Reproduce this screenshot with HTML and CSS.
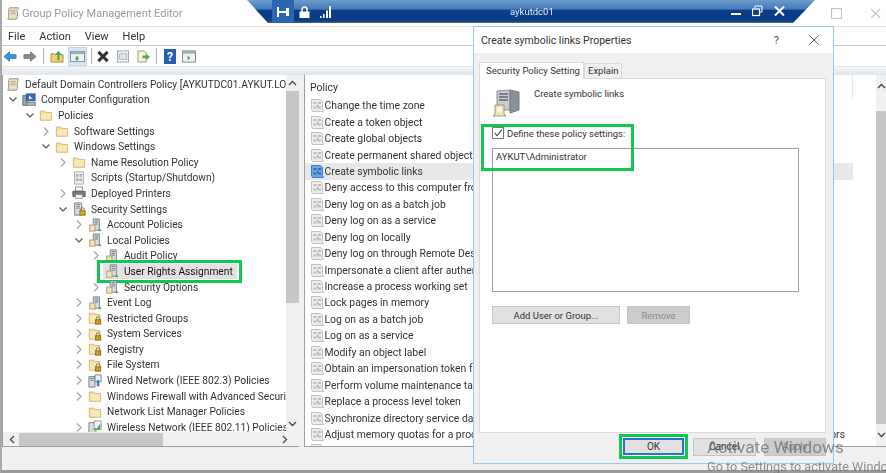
FILE: index.html
```html
<!DOCTYPE html>
<html>
<head>
    <link rel="stylesheet" href="styles.css">
</head>
<body>
    <svg class="defs" width="0" height="0">
        <symbol id="scroll" viewBox="0 0 16 16">
            <path d="M4 2h10v2l-1 1v8l-1 2H2l1-2V4z" fill="#eee3c4" stroke="#8f8a78"/>
            <path d="M5 5h6M5 7h6M5 9h6" stroke="#a9a28c"/>
        </symbol>
        <symbol id="computer" viewBox="0 0 16 16">
            <rect x="1" y="3" width="5" height="11" fill="#9aa3ad" stroke="#5f6870"/>
            <rect x="5" y="1" width="10" height="8" fill="#2f6fd0" stroke="#4a5560"/>
            <path d="M6 11h9l1 3H5z" fill="#b9c0c8" stroke="#6b747d"/>
            <path d="M8 3l4 3-4 1z" fill="#fff"/>
        </symbol>
        <symbol id="folder" viewBox="0 0 16 16">
            <path d="M1.500 3.500h5l1 1.500h7v9h-13z" fill="#f6dc9a" stroke="#d3b36c"/>
            <path d="M2.500 6h11v7h-11z" fill="#fae8b8"/>
        </symbol>
        <symbol id="folder-lock" viewBox="0 0 16 16">
            <path d="M1.500 2.500h5l1 1.500h6v10h-12z" fill="#f6dc9a" stroke="#d3b36c"/>
            <path d="M2.500 5h10v8h-10z" fill="#fae8b8"/>
            <path d="M9.500 10V8.500a2 2 0 0 1 4 0V10" fill="none" stroke="#7d6a3a"/>
            <rect x="8.500" y="10" width="6" height="5" fill="#c99a25" stroke="#8b6a18"/>
        </symbol>
        <symbol id="server" viewBox="0 0 16 16">
            <path d="M6 1h7v13H6z" fill="#d8dcdf" stroke="#6f7a84"/>
            <path d="M7.500 3h4M7.500 5h4M7.500 7h4" stroke="#6f7a84"/>
            <rect x="2" y="8" width="6" height="7" fill="#efe3bd" stroke="#a8986a"/>
            <rect x="12" y="13" width="3" height="2" fill="#45b04a"/>
        </symbol>
        <symbol id="server-lock" viewBox="0 0 16 16">
            <path d="M3 1h8v14H3z" fill="#d8dcdf" stroke="#6f7a84"/>
            <path d="M5 3h4M5 5h4M5 7h4" stroke="#6f7a84"/>
            <path d="M10 10V8.500a2 2 0 0 1 4 0V10" fill="none" stroke="#7d6a3a"/>
            <rect x="9" y="10" width="6" height="5" fill="#d9a92a" stroke="#8b6a18"/>
        </symbol>
        <symbol id="scripts" viewBox="0 0 16 16">
            <path d="M3 1h10v14H3z" fill="#f1f1f1" stroke="#a5a5a5"/>
            <path d="M5 4h2v2H5zM9 4h2v2H9zM5 9h2v2H5zM9 9h2v2H9z" fill="none" stroke="#9a9a9a"/>
        </symbol>
        <symbol id="printer" viewBox="0 0 16 16">
            <path d="M4 1h8v5H4z" fill="#f4f4f4" stroke="#8b8b8b"/>
            <path d="M1 6h14v6H1z" fill="#77797c" stroke="#55585c"/>
            <path d="M4 10h8v4H4z" fill="#fff" stroke="#8b8b8b"/>
        </symbol>
        <symbol id="wired" viewBox="0 0 16 16">
            <path d="M1 3h7v12H1z" fill="#d8dcdf" stroke="#6f7a84"/>
            <path d="M8 1h7v8H8z" fill="#e9eef3" stroke="#6f7a84"/>
            <path d="M10 7h3v7h-3z" fill="#3d7fd0"/>
            <path d="M2.500 5h4M2.500 7h4" stroke="#6f7a84"/>
        </symbol>
        <symbol id="wireless" viewBox="0 0 16 16">
            <path d="M1 3h8v12H1z" fill="#d8dcdf" stroke="#6f7a84"/>
            <path d="M7 1h8v10H7z" fill="#f0f2f4" stroke="#8a939b"/>
            <path d="M4 12l4-3 2 1 4-6v7H4z" fill="#45a84a"/>
        </symbol>
        <symbol id="policy" viewBox="0 0 14 15">
            <path d="M1.500 1.500h9l2 2v8l1 2h-11l-1-2z" fill="#ededed" stroke="#c2c2c2"/>
            <path d="M3.500 4h3v2h-3zM8 4h3v2H8zM3.500 8.500h3v2h-3zM8 8.500h3v2H8z" fill="#bdbdbd"/>
            <path d="M7 6.500l2 1.500-2 1.500z" fill="#a8a8a8"/>
        </symbol>
        <symbol id="policy-on" viewBox="0 0 14 15">
            <path d="M1.500 1.500h9l2 2v8l1 2h-11l-1-2z" fill="#6aa6e6" stroke="#3f80cc"/>
            <path d="M3.500 4h3v2h-3zM8 4h3v2H8zM3.500 8.500h3v2h-3zM8 8.500h3v2H8z" fill="#2f6fc0"/>
            <path d="M7 6.500l2 1.500-2 1.500z" fill="#2f6fc0"/>
        </symbol>
        <symbol id="open" viewBox="0 0 8 11">
            <path d="M.5 3.500L4 7l3.500-3.500" fill="none" stroke="#555" stroke-width="1.200"/>
        </symbol>
        <symbol id="closed" viewBox="0 0 8 11">
            <path d="M2 1.500l4 4-4 4" fill="none" stroke="#a6a6a6" stroke-width="1.200"/>
        </symbol>
    </svg>

    <div class="window">
        <div class="titlebar">
            <svg class="ico" viewBox="0 0 16 16"><use href="#scroll"/></svg>
            <span class="title-text">Group Policy Management Editor</span>
            <span class="title-controls">
                <svg width="11" height="11" viewBox="0 0 11 11"><rect x=".5" y=".5" width="10" height="10" fill="none" stroke="#c4c4c4" stroke-width="1.200"/></svg>
                <svg width="11" height="11" viewBox="0 0 11 11"><path d="M1 1l9 9M10 1l-9 9" stroke="#c4c4c4" stroke-width="1.100"/></svg>
            </span>
        </div>

        <div class="menubar">
            <span>File</span>
            <span>Action</span>
            <span>View</span>
            <span>Help</span>
        </div>

        <div class="toolbar">
            <svg class="tool" viewBox="0 0 15 14"><path d="M1 7l6-5v3h7v4H7v3z" fill="#3a96dc" stroke="#2a78bc"/></svg>
            <svg class="tool" viewBox="0 0 15 14"><path d="M14 7L8 2v3H1v4h7v3z" fill="#8a8a8a" stroke="#777"/></svg>
            <span class="tool-sep"></span>
            <svg class="tool" viewBox="0 0 15 14"><path d="M1 4h4l1 1h8v8H1z" fill="#f0cf7c" stroke="#b08c3c"/><path d="M8 11V5H5l4-4 4 4h-3v6z" fill="#49a54a"/></svg>
            <span class="tool-on">
                <svg class="tool-in" viewBox="0 0 16 14"><rect x=".5" y="1.500" width="15" height="11" fill="#eef2f5" stroke="#7d8a94"/><path d="M1 1.500h14v3H1z" fill="#a3aeb6"/><path d="M6 7h3v4H6z" fill="#49a54a"/></svg>
            </span>
            <span class="tool-sep"></span>
            <svg class="tool cross" viewBox="0 0 14 14"><path d="M2 2l10 10M12 2L2 12" stroke="#333" stroke-width="3.200"/></svg>
            <svg class="tool" viewBox="0 0 14 14"><rect x="1" y="1" width="12" height="12" fill="#f1f3f5" stroke="#9aa4ac"/><path d="M3 4h8v6H3z" fill="#dfe6ec" stroke="#a7b2ba"/></svg>
            <svg class="tool" viewBox="0 0 15 14"><path d="M2 1h7l2 2v10H2z" fill="#f6f0dc" stroke="#a09a80"/><path d="M7 6h4V4l4 3.500L11 11V9H7z" fill="#45b04a"/></svg>
            <span class="tool-sep"></span>
            <svg class="tool help" viewBox="0 0 12 15"><rect width="12" height="15" fill="#2660b0"/><text x="6" y="12" class="help-q">?</text></svg>
            <svg class="tool" viewBox="0 0 15 13"><rect x=".5" y=".5" width="14" height="12" fill="#eef2f5" stroke="#7d8a94"/><path d="M1 .5h13v3H1z" fill="#a3aeb6"/><path d="M6 5.500l3 2.500-3 2.500z" fill="#49a54a"/></svg>
        </div>

        <div class="toolbar-gap"></div>

        <div class="panes">
            <div class="tree-pane">
                <div class="tree-body">
                    <div class="tree">
                        <div class="row lv0"><svg class="ico"><use href="#scroll"/></svg><span>Default Domain Controllers Policy [AYKUTDC01.AYKUT.LOCAL] Policy</span></div>
                        <div class="row lv1"><svg class="chev"><use href="#open"/></svg><svg class="ico"><use href="#computer"/></svg><span>Computer Configuration</span></div>
                        <div class="row lv2"><svg class="chev"><use href="#open"/></svg><svg class="ico"><use href="#folder"/></svg><span>Policies</span></div>
                        <div class="row lv3"><svg class="chev"><use href="#closed"/></svg><svg class="ico"><use href="#folder"/></svg><span>Software Settings</span></div>
                        <div class="row lv3"><svg class="chev"><use href="#open"/></svg><svg class="ico"><use href="#folder"/></svg><span>Windows Settings</span></div>
                        <div class="row lv4"><svg class="chev"><use href="#closed"/></svg><svg class="ico"><use href="#folder"/></svg><span>Name Resolution Policy</span></div>
                        <div class="row lv4"><i class="chev"></i><svg class="ico"><use href="#scripts"/></svg><span>Scripts (Startup/Shutdown)</span></div>
                        <div class="row lv4"><svg class="chev"><use href="#closed"/></svg><svg class="ico"><use href="#printer"/></svg><span>Deployed Printers</span></div>
                        <div class="row lv4"><svg class="chev"><use href="#open"/></svg><svg class="ico"><use href="#server-lock"/></svg><span>Security Settings</span></div>
                        <div class="row lv5"><svg class="chev"><use href="#closed"/></svg><svg class="ico"><use href="#server"/></svg><span>Account Policies</span></div>
                        <div class="row lv5"><svg class="chev"><use href="#open"/></svg><svg class="ico"><use href="#server"/></svg><span>Local Policies</span></div>
                        <div class="row lv6"><svg class="chev"><use href="#closed"/></svg><svg class="ico"><use href="#server"/></svg><span>Audit Policy</span></div>
                        <div class="row lv6"><i class="chev"></i><span class="marked"><svg class="ico"><use href="#server"/></svg><span>User Rights Assignment</span></span></div>
                        <div class="row lv6"><svg class="chev"><use href="#closed"/></svg><svg class="ico"><use href="#server"/></svg><span>Security Options</span></div>
                        <div class="row lv5"><svg class="chev"><use href="#closed"/></svg><svg class="ico"><use href="#server"/></svg><span>Event Log</span></div>
                        <div class="row lv5"><svg class="chev"><use href="#closed"/></svg><svg class="ico"><use href="#folder-lock"/></svg><span>Restricted Groups</span></div>
                        <div class="row lv5"><svg class="chev"><use href="#closed"/></svg><svg class="ico"><use href="#folder-lock"/></svg><span>System Services</span></div>
                        <div class="row lv5"><svg class="chev"><use href="#closed"/></svg><svg class="ico"><use href="#folder-lock"/></svg><span>Registry</span></div>
                        <div class="row lv5"><svg class="chev"><use href="#closed"/></svg><svg class="ico"><use href="#folder-lock"/></svg><span>File System</span></div>
                        <div class="row lv5"><svg class="chev"><use href="#closed"/></svg><svg class="ico"><use href="#wired"/></svg><span>Wired Network (IEEE 802.3) Policies</span></div>
                        <div class="row lv5"><svg class="chev"><use href="#closed"/></svg><svg class="ico"><use href="#folder"/></svg><span>Windows Firewall with Advanced Security</span></div>
                        <div class="row lv5"><i class="chev"></i><svg class="ico"><use href="#folder"/></svg><span>Network List Manager Policies</span></div>
                        <div class="row lv5"><svg class="chev"><use href="#closed"/></svg><svg class="ico"><use href="#wireless"/></svg><span>Wireless Network (IEEE 802.11) Policies</span></div>
                    </div>
                    <div class="vscroll tree-scroll">
                        <svg class="arrow" viewBox="0 0 9 6"><path d="M1 5l3.500-3.500L8 5" fill="none" stroke="#444" stroke-width="1.300"/></svg>
                        <div class="thumb"></div>
                        <svg class="arrow arrow-down" viewBox="0 0 9 6"><path d="M1 1l3.500 3.500L8 1" fill="none" stroke="#444" stroke-width="1.300"/></svg>
                    </div>
                </div>
                <div class="hscroll">
                    <svg class="arrow-h" viewBox="0 0 6 9"><path d="M5 1L1.500 4.500 5 8" fill="none" stroke="#444" stroke-width="1.300"/></svg>
                    <div class="hthumb"></div>
                    <svg class="arrow-h arrow-right" viewBox="0 0 6 9"><path d="M1 1l3.500 3.500L1 8" fill="none" stroke="#444" stroke-width="1.300"/></svg>
                </div>
            </div>

            <div class="policy-pane">
                <div class="policy-main">
                    <div class="policy-head">Policy</div>
                    <div class="policy-row"><svg class="pico"><use href="#policy"/></svg>Change the time zone</div>
                    <div class="policy-row"><svg class="pico"><use href="#policy"/></svg>Create a token object</div>
                    <div class="policy-row"><svg class="pico"><use href="#policy"/></svg>Create global objects</div>
                    <div class="policy-row"><svg class="pico"><use href="#policy"/></svg>Create permanent shared objects</div>
                    <div class="policy-row selected"><svg class="pico"><use href="#policy-on"/></svg>Create symbolic links</div>
                    <div class="policy-row"><svg class="pico"><use href="#policy"/></svg>Deny access to this computer from the network</div>
                    <div class="policy-row"><svg class="pico"><use href="#policy"/></svg>Deny log on as a batch job</div>
                    <div class="policy-row"><svg class="pico"><use href="#policy"/></svg>Deny log on as a service</div>
                    <div class="policy-row"><svg class="pico"><use href="#policy"/></svg>Deny log on locally</div>
                    <div class="policy-row"><svg class="pico"><use href="#policy"/></svg>Deny log on through Remote Desktop Services</div>
                    <div class="policy-row"><svg class="pico"><use href="#policy"/></svg>Impersonate a client after authentication</div>
                    <div class="policy-row"><svg class="pico"><use href="#policy"/></svg>Increase a process working set</div>
                    <div class="policy-row"><svg class="pico"><use href="#policy"/></svg>Lock pages in memory</div>
                    <div class="policy-row"><svg class="pico"><use href="#policy"/></svg>Log on as a batch job</div>
                    <div class="policy-row"><svg class="pico"><use href="#policy"/></svg>Log on as a service</div>
                    <div class="policy-row"><svg class="pico"><use href="#policy"/></svg>Modify an object label</div>
                    <div class="policy-row"><svg class="pico"><use href="#policy"/></svg>Obtain an impersonation token for another user</div>
                    <div class="policy-row"><svg class="pico"><use href="#policy"/></svg>Perform volume maintenance tasks</div>
                    <div class="policy-row"><svg class="pico"><use href="#policy"/></svg>Replace a process level token</div>
                    <div class="policy-row"><svg class="pico"><use href="#policy"/></svg>Synchronize directory service data</div>
                    <div class="policy-row"><svg class="pico"><use href="#policy"/></svg>Adjust memory quotas for a process<span class="second-col">ors</span></div>
                    <div class="policy-row"><svg class="pico"><use href="#policy"/></svg>Generate security audits</div>
                </div>
                <div class="vscroll policy-scroll">
                    <svg class="arrow" viewBox="0 0 9 6"><path d="M1 5l3.500-3.500L8 5" fill="none" stroke="#444" stroke-width="1.300"/></svg>
                    <div class="thumb"></div>
                    <svg class="arrow arrow-down" viewBox="0 0 9 6"><path d="M1 1l3.500 3.500L8 1" fill="none" stroke="#444" stroke-width="1.300"/></svg>
                </div>
            </div>
        </div>

        <div class="statusbar"></div>
    </div>

    <div class="rdp-bar">
        <div class="rdp-left">
            <span class="rdp-pin">
                <svg width="13" height="10" viewBox="0 0 13 10"><path d="M1 0v10" stroke="#fff" stroke-width="2"/><path d="M1 5h8" stroke="#fff" stroke-width="2"/><path d="M9 1h3v8H9z" fill="#fff"/></svg>
            </span>
            <svg width="11" height="12" viewBox="0 0 11 12"><path d="M3 6V3.500a2.500 2.500 0 0 1 5 0V6" fill="none" stroke="#fff" stroke-width="1.500"/><rect x=".5" y="5.500" width="10" height="6.500" fill="#fff"/></svg>
            <svg width="11" height="12" viewBox="0 0 11 12"><path d="M0 10h1.500v2H0zM3 8h1.500v4H3zM6 4.500h2V12H6zM9 0h2v12H9z" fill="#fff"/></svg>
        </div>
        <span class="rdp-name">aykutdc01</span>
        <div class="rdp-right">
            <svg width="10" height="12" viewBox="0 0 10 12"><rect y="8" width="10" height="2" fill="#fff"/></svg>
            <svg width="11" height="12" viewBox="0 0 11 12"><path d="M3 3V1h7v6H8" fill="none" stroke="#fff"/><rect x=".5" y="4" width="7" height="6.500" fill="none" stroke="#fff" stroke-width="1.200"/></svg>
            <svg width="11" height="10" viewBox="0 0 11 10"><path d="M1 .5l9 9M10 .5l-9 9" stroke="#fff" stroke-width="2"/></svg>
        </div>
    </div>

    <div class="dialog">
        <div class="dialog-title">
            <span class="dialog-caption">Create symbolic links Properties</span>
            <span class="dialog-help">?</span>
            <svg width="10" height="10" viewBox="0 0 10 10"><path d="M.5.5l9 9M9.500.5l-9 9" stroke="#444" stroke-width=".9"/></svg>
        </div>
        <div class="dialog-body">
            <div class="tabs">
                <span class="tab tab-on">Security Policy Setting</span>
                <span class="tab">Explain</span>
            </div>
            <div class="tab-page">
                <div class="policy-info">
                    <svg width="28" height="28" viewBox="0 0 28 28">
                        <path d="M5 2l13-1v20H5z" fill="#c9ccd0" stroke="#8a9097"/>
                        <path d="M18 1l9 2v18l-9 3z" fill="#8a9097" stroke="#777d84"/>
                        <path d="M7 5h9M7 8h9M7 11h9" stroke="#5f666d" stroke-width="1.500"/>
                        <path d="M3 16h9v9l2 2H1l2-2z" fill="#efe3bd" stroke="#a8986a"/>
                        <rect x="5" y="18" width="5" height="5" fill="#f8f3e2"/>
                    </svg>
                    <span class="info-text">Create symbolic links</span>
                </div>
                <label class="define">
                    <span class="checkbox"><svg width="10" height="10" viewBox="0 0 11 11"><path d="M2 5.500l2.500 3L9.500 2" fill="none" stroke="#333" stroke-width="1.200"/></svg></span>
                    Define these policy settings:
                </label>
                <div class="listbox">AYKUT\Administrator</div>
                <div class="list-buttons">
                    <span class="btn add-btn">Add User or Group...</span>
                    <span class="btn remove-btn">Remove</span>
                </div>
                <span class="green-box define-box"></span>
            </div>
            <div class="dialog-buttons">
                <span class="ok-frame"><span class="btn ok-btn">OK</span></span>
                <span class="btn footer-btn">Cancel</span>
                <span class="btn footer-btn apply-btn">Apply</span>
            </div>
        </div>
    </div>

    <div class="watermark">
        <div class="wm-big">Activate Windows</div>
        <div class="wm-small">Go to Settings to activate Windows.</div>
    </div>
</body>
</html>
```

FILE: styles.css
```css
* {
    box-sizing: border-box;
}

html, body {
    margin: 0;
    height: 473px;
    overflow: hidden;
}

body {
    background-color: #ffffff;
    color: #333333;
    font-family: Roboto, Arial, sans-serif;
    font-size: 10.400px;
    filter: blur(0.3px);
}

.defs {
    position: absolute;
}

svg {
    display: block;
    flex: none;
}

.window {
    height: 473px;
    display: flex;
    flex-direction: column;
    border-left: 2px solid #a8a8a8;
    border-bottom: 3px solid #9a9a9a;
}

.titlebar {
    height: 27px;
    flex: none;
    display: flex;
    align-items: center;
    padding-left: 4px;
    border-bottom: 1px solid #e2e2e2;
}

.titlebar .ico {
    width: 14px;
    height: 16px;
}

.title-text {
    margin-left: 2px;
    color: #9a9a9a;
    font-size: 11px;
}

.title-controls {
    margin-left: auto;
    display: flex;
    gap: 28px;
    padding-right: 5px;
}

.menubar {
    height: 19px;
    flex: none;
    display: flex;
    align-items: center;
    gap: 14px;
    padding-left: 6px;
    border-bottom: 1px solid #c9c9c9;
    font-size: 11px;
}

.toolbar {
    height: 20px;
    flex: none;
    display: flex;
    align-items: center;
    padding-left: 1px;
    gap: 6px;
}

.tool {
    width: 14px;
    height: 13px;
}

.tool-sep {
    width: 1px;
    height: 16px;
    background-color: #b5b5b5;
}

.tool-on {
    width: 19px;
    height: 19px;
    margin-left: -2px;
    margin-right: -2px;
    background-color: #d8e8f5;
    border: 1px solid #bcd8ee;
    display: flex;
    align-items: center;
    justify-content: center;
}

.tool-in {
    width: 15px;
    height: 13px;
}

.cross {
    margin-left: -2px;
}

.help {
    width: 12px;
    height: 15px;
    margin-left: 1px;
}

.help-q {
    fill: #ffffff;
    font-size: 12px;
    font-weight: bold;
    text-anchor: middle;
}

.toolbar-gap {
    height: 9px;
    flex: none;
    background: linear-gradient(#f2f4f6, #dfe6ec);
    border-top: 1px solid #e4e4e4;
}

.panes {
    flex: 1;
    min-height: 0;
    display: flex;
    background-color: #f0f0f0;
    padding-bottom: 2px;
}

.tree-pane {
    width: 297px;
    flex: none;
    display: flex;
    flex-direction: column;
    border-left: 1px solid #9f9f9f;
    border-bottom: 1px solid #9f9f9f;
}

.tree-body {
    flex: 1;
    min-height: 0;
    display: flex;
}

.tree {
    flex: 1;
    min-width: 0;
    background-color: #ffffff;
    overflow: hidden;
    padding-top: 1.500px;
    font-size: 10.200px;
}

.row {
    height: 15.600px;
    display: flex;
    align-items: center;
    white-space: nowrap;
}

.row .chev {
    width: 8px;
    height: 11px;
    flex: none;
    margin-right: 5px;
}

.row .ico {
    width: 14px;
    height: 14px;
    flex: none;
    margin-right: 5px;
}

.lv0 {
    padding-left: 3px;
}

.lv1 {
    padding-left: 6px;
}

.lv2 {
    padding-left: 23px;
}

.lv3 {
    padding-left: 39px;
}

.lv4 {
    padding-left: 56px;
}

.lv5 {
    padding-left: 72px;
}

.lv6 {
    padding-left: 89px;
}

.marked {
    display: flex;
    align-items: center;
    height: 17px;
    margin-left: -5px;
    padding-left: 2px;
    padding-right: 4px;
    background-color: #e2e2e2;
    border: solid #ffffff;
    border-width: 1px 2px 1px 3px;
    outline: 3px solid #10c850;
    color: #111111;
}

.vscroll {
    width: 13px;
    flex: none;
    background-color: #f0f0f0;
    display: flex;
    flex-direction: column;
    align-items: center;
}

.arrow {
    width: 9px;
    height: 6px;
    margin: 5px 0;
    flex: none;
}

.arrow-down {
    margin-top: auto;
}

.thumb {
    width: 100%;
    background-color: #c6c6c6;
}

.tree-scroll .thumb {
    height: 212px;
}

.hscroll {
    height: 14px;
    flex: none;
    display: flex;
    align-items: center;
    background-color: #f0f0f0;
    padding: 0 4px;
    border-top: 1px solid #f0f0f0;
}

.arrow-h {
    width: 6px;
    height: 9px;
    margin: 0 2px;
    flex: none;
}

.hthumb {
    width: 144px;
    height: 13px;
    margin-left: 2px;
    background-color: #c6c6c6;
}

.arrow-right {
    margin-left: auto;
    margin-right: 7px;
}

.policy-pane {
    flex: 1;
    min-width: 0;
    margin-left: 5px;
    display: flex;
    background-color: #ffffff;
    border-left: 1px solid #9f9f9f;
    border-bottom: 1px solid #9f9f9f;
}

.policy-main {
    flex: 1;
    min-width: 0;
    overflow: hidden;
}

.policy-head {
    height: 22.500px;
    line-height: 25px;
    padding-left: 5px;
    width: 548px;
    border-right: 1px solid #e6e6e6;
}

.policy-row {
    height: 16.450px;
    width: 548px;
    display: flex;
    align-items: center;
    padding-left: 5px;
    white-space: nowrap;
}

.selected {
    background-color: #e8e8e8;
}

.pico {
    width: 14px;
    height: 15px;
    margin-right: .5px;
}

.second-col {
    margin-left: auto;
    margin-right: 8px;
}

.policy-scroll {
    width: 10px;
}

.policy-scroll .arrow {
    margin: 8px 0;
}

.policy-scroll .thumb {
    height: 317px;
    margin-top: 14px;
}

.statusbar {
    height: 21px;
    flex: none;
    background-color: #f0f0f0;
}

.rdp-bar {
    position: absolute;
    top: 0;
    left: 247px;
    width: 568px;
    height: 23px;
    padding: 0 30px 0 25px;
    display: flex;
    align-items: center;
    color: #e8eef6;
    font-size: 9.500px;
    clip-path: polygon(0 0, 100% 0, 546px 100%, 21px 100%);
    background: linear-gradient(#6d9ccc 0, #4279b8 40%, #0b3d86 44%, #0b3d86 92%, #5e6a78 100%);
}

.rdp-left {
    display: flex;
    align-items: center;
    gap: 10px;
    width: 238px;
}

.rdp-pin {
    height: 23px;
    width: 22px;
    display: flex;
    align-items: center;
    justify-content: center;
    margin-right: -5px;
    background-color: #2c66ae;
}

.rdp-name {
    padding-bottom: 1px;
}

.rdp-right {
    margin-left: auto;
    display: flex;
    align-items: center;
    gap: 11px;
    padding-bottom: 2px;
}

.dialog {
    position: absolute;
    top: 26px;
    left: 473px;
    width: 361px;
    height: 438px;
    display: flex;
    flex-direction: column;
    border: 1px solid #99c8ec;
    background-color: #f0f0f0;
}

.dialog-title {
    height: 26px;
    flex: none;
    display: flex;
    align-items: center;
    padding: 0 14px 0 7px;
    background-color: #ffffff;
    font-size: 10.500px;
}

.dialog-caption {
    flex: 1;
}

.dialog-help {
    margin-right: 30px;
    color: #555555;
    font-size: 11px;
}

.dialog-body {
    flex: 1;
    min-height: 0;
    display: flex;
    flex-direction: column;
    padding: 8px 7px 0 5px;
}

.tabs {
    height: 17px;
    flex: none;
    display: flex;
    align-items: flex-end;
    font-size: 9.500px;
}

.tab {
    height: 15px;
    line-height: 14px;
    padding: 0 3px;
    background-color: #f0f0f0;
    border: 1px solid #dadada;
    border-bottom: none;
}

.tab-on {
    height: 17px;
    line-height: 15px;
    width: 105px;
    padding: 0 6px;
    white-space: nowrap;
    background-color: #ffffff;
    position: relative;
    z-index: 1;
    margin-bottom: -1px;
}

.tab-page {
    height: 355px;
    flex: none;
    position: relative;
    padding: 10px 26px 0 12px;
    background-color: #ffffff;
    border: 1px solid #dadada;
    font-size: 9.500px;
}

.policy-info {
    display: flex;
    gap: 14px;
    height: 37px;
}

.info-text {
    margin-top: -1px;
}

.define {
    display: flex;
    align-items: center;
    gap: 3px;
    height: 14px;
}

.checkbox {
    width: 12px;
    height: 12px;
    border: 1px solid #7a7a7a;
}

.listbox {
    height: 144px;
    margin-top: 8px;
    padding: 2px 3px;
    border: 1px solid #a0a0a0;
}

.list-buttons {
    display: flex;
    gap: 7px;
    margin-top: 14px;
}

.btn {
    display: flex;
    align-items: center;
    justify-content: center;
    height: 18px;
    background-color: #e1e1e1;
    border: 1px solid #c4c4c4;
}

.add-btn {
    width: 128px;
}

.remove-btn {
    width: 63px;
    background-color: #cccccc;
    color: #8a8a8a;
}

.green-box {
    position: absolute;
    border: 3px solid #10c850;
}

.define-box {
    top: 45px;
    left: 1px;
    width: 153px;
    height: 47px;
}

.dialog-buttons {
    flex: 1;
    display: flex;
    align-items: center;
    gap: 8px;
    padding: 0 0 3px 140px;
    font-size: 10px;
}

.ok-frame {
    border: 3px solid #10c850;
    padding: 1px;
    margin-right: -3px;
    background-color: #f0f0f0;
}

.ok-btn {
    width: 61px;
    height: 17px;
    border: 2px solid #2b74c8;
}

.footer-btn {
    width: 63px;
    height: 18px;
}

.apply-btn {
    background-color: #cccccc;
    color: #8a8a8a;
}

.watermark {
    position: absolute;
    top: 434px;
    left: 707px;
    white-space: nowrap;
    color: rgba(110, 110, 110, 0.75);
    pointer-events: none;
}

.wm-big {
    font-size: 17.200px;
    line-height: 26px;
}

.wm-small {
    font-size: 12.700px;
    line-height: 15px;
    margin-top: -1px;
}
```
